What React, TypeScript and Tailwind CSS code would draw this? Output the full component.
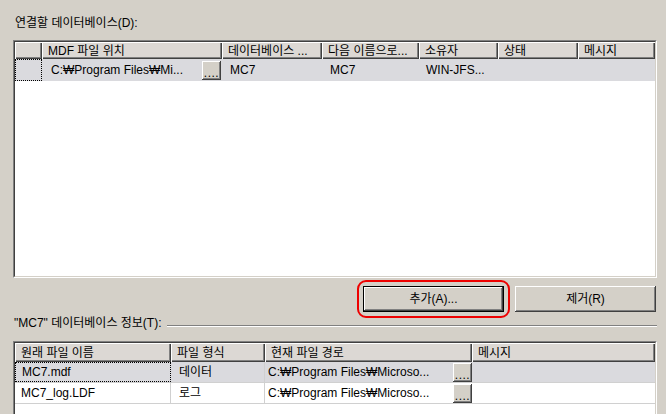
import React from 'react';

const raised =
  'shadow-[inset_-1px_-1px_0_#404040,inset_1px_1px_0_#ffffff,inset_-2px_-2px_0_#808080,inset_2px_2px_0_#d4d0c8]';
const headerCell =
  'shrink-0 h-full flex items-center bg-[#dcd8d4] pl-[6px] whitespace-nowrap overflow-hidden shadow-[inset_1px_1px_0_#ffffff,inset_-1px_-1px_0_#404040,inset_-2px_-2px_0_#808080]';

function DotsButton() {
  return (
    <div className={`w-[19px] h-[19px] shrink-0 bg-[#d4d0c8] flex items-end justify-center pb-[3px] text-[12px] leading-[8px] tracking-[0.5px] ${raised}`}>
      ....
    </div>
  );
}

function Sunken({ className, children }: { className: string; children: React.ReactNode }) {
  return (
    <div className={`border border-t-[#808080] border-l-[#808080] border-r-white border-b-white ${className}`}>
      <div className="h-full border border-t-[#404040] border-l-[#404040] border-r-[#d4d0c8] border-b-[#d4d0c8] bg-white overflow-hidden">
        {children}
      </div>
    </div>
  );
}

export default function App() {
  const topCols = [
    { w: 'w-[27px]', label: '' },
    { w: 'w-[180px]', label: 'MDF 파일 위치' },
    { w: 'w-[100px]', label: '데이터베이스 ...' },
    { w: 'w-[97px]', label: '다음 이름으로...' },
    { w: 'w-[79px]', label: '소유자' },
    { w: 'w-[80px]', label: '상태' },
    { w: 'w-[77px]', label: '메시지' },
  ];
  const bottomCols = [
    { w: 'w-[156px]', label: '원래 파일 이름' },
    { w: 'w-[94px]', label: '파일 형식' },
    { w: 'w-[207px]', label: '현재 파일 경로' },
    { w: 'w-[183px]', label: '메시지' },
  ];
  const files = [
    { name: 'MC7.mdf', type: '데이터', selected: true },
    { name: 'MC7_log.LDF', type: '로그', selected: false },
  ];

  return (
    <div
      className="w-[666px] h-[414px] overflow-hidden bg-[#d4d0c8] text-black text-[12px] leading-[14px] pl-[13px] pr-[9px] pt-[16px]"
      style={{ fontFamily: '"Liberation Sans", "Noto Sans CJK KR", sans-serif' }}
    >
      <div className="pl-[2px] h-[14px]">연결할 데이터베이스(D):</div>

      {/* attach list */}
      <Sunken className="mt-[10px] h-[238px]">
        <div className="flex h-[17px]">
          {topCols.map((c, i) => (
            <div key={i} className={`${headerCell} ${c.w}`}>{c.label}</div>
          ))}
        </div>
        <div className="flex h-[22px] bg-[#dadade]">
          <div className="w-[27px] shrink-0 h-full border border-dotted border-black" />
          <div className="w-[180px] shrink-0 flex items-center pl-[9px] pr-[1px]">
            <span className="flex-1 whitespace-nowrap overflow-hidden">C:₩Program Files₩Mi...</span>
            <DotsButton />
          </div>
          <div className="w-[100px] shrink-0 flex items-center pl-[8px]">MC7</div>
          <div className="w-[97px] shrink-0 flex items-center pl-[8px]">MC7</div>
          <div className="w-[79px] shrink-0 flex items-center pl-[7px]">WIN-JFS...</div>
          <div className="w-[80px] shrink-0" />
          <div className="w-[77px] shrink-0" />
        </div>
      </Sunken>

      {/* buttons */}
      <div className="mt-[8px] flex justify-end gap-[11px] pr-[1px]">
        <div className="relative">
          <div className={`w-[141px] h-[26px] flex items-center justify-center border border-black bg-[#d4d0c8] ${raised}`}>
            추가(A)...
          </div>
          <div className="absolute -inset-[6px] rounded-[9px] border-2 border-[#ee0000]" />
        </div>
        <div className={`w-[141px] h-[26px] flex items-center justify-center bg-[#d4d0c8] ${raised}`}>
          제거(R)
        </div>
      </div>

      {/* group header */}
      <div className="mt-[4px] flex items-center h-[14px]">
        <span className="pl-[1px] whitespace-nowrap">"MC7" 데이터베이스 정보(T):</span>
        <div className="flex-1 ml-[5px] mt-[6px] border-t border-t-[#808080] border-b border-b-white" />
      </div>

      {/* file list */}
      <Sunken className="mt-[11px] h-[110px]">
        <div className="flex h-[19px]">
          {bottomCols.map((c, i) => (
            <div key={i} className={`${headerCell} ${c.w}`}>{c.label}</div>
          ))}
        </div>
        {files.map((f) => (
          <div key={f.name} className={`flex h-[21px] border-b border-[#d0d0d0] ${f.selected ? 'bg-[#dadade]' : 'bg-white'}`}>
            <div className={`w-[156px] shrink-0 flex items-center pl-[6px] ${f.selected ? 'border border-dotted border-black' : 'border-r border-[#d0d0d0]'}`}>
              {f.name}
            </div>
            <div className="w-[94px] shrink-0 flex items-center pl-[8px] border-r border-[#d0d0d0]">{f.type}</div>
            <div className="w-[207px] shrink-0 flex items-center pl-[3px]">
              <span className="flex-1 whitespace-nowrap overflow-hidden">C:₩Program Files₩Microso...</span>
              <DotsButton />
            </div>
            <div className="w-[183px] shrink-0" />
          </div>
        ))}
      </Sunken>
    </div>
  );
}
